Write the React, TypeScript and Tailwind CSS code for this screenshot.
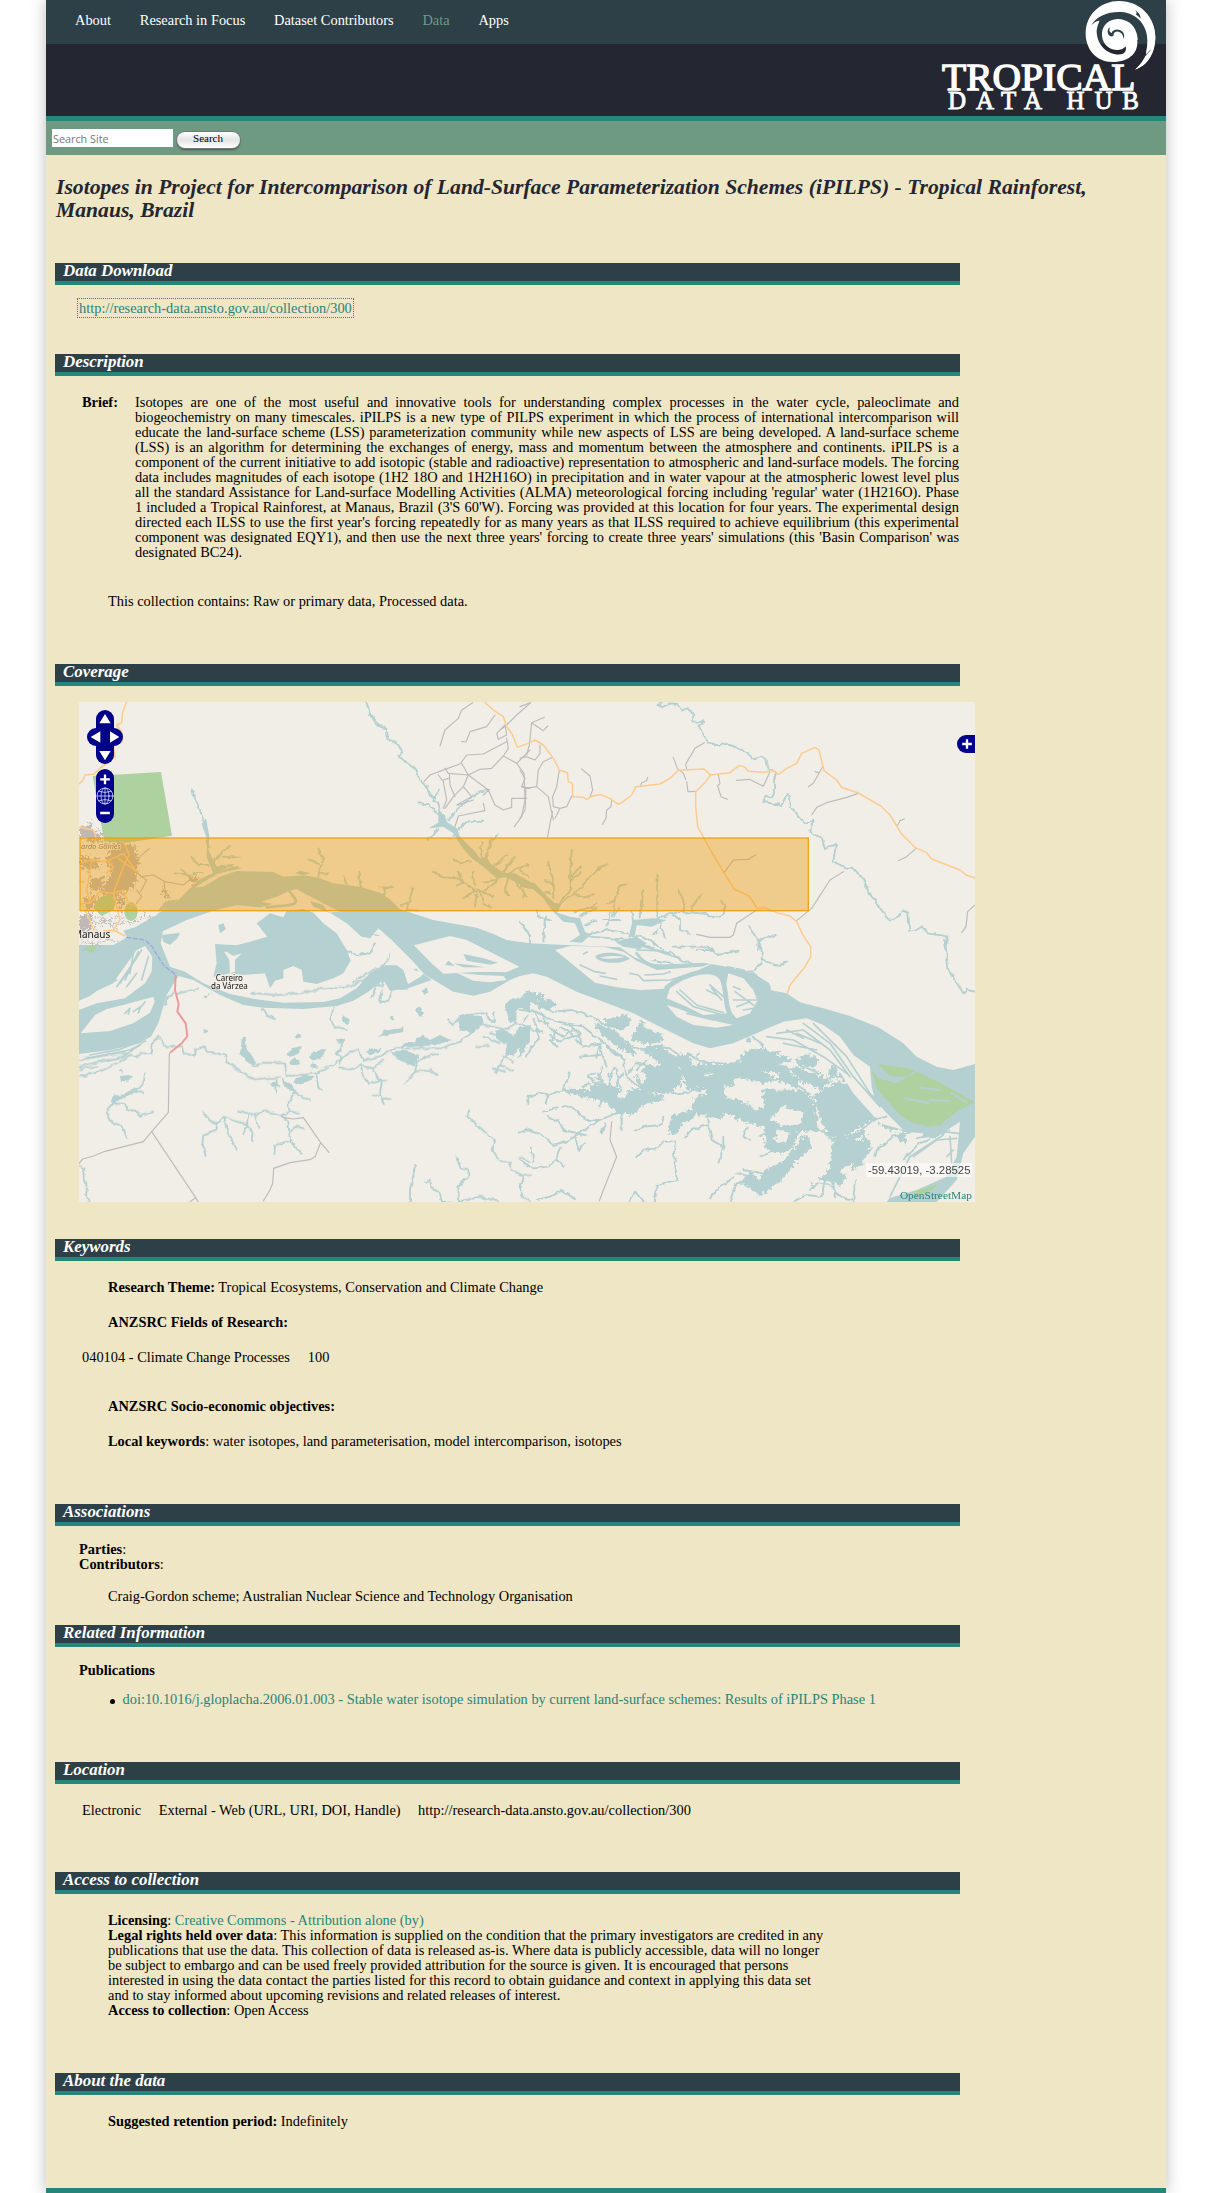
import React from "react";

const WATER = "#b5d0d0";
const LAND = "#f1eee8";
const ROAD = "#bcbcbc";
const ORANGE = "#fdcb8e";

/* The map is drawn on a 3x grid split into four quadrants: A (NW), B (NE), C (SW), D (SE). */

const riverMain =
  "M262 672L325 630L365 590L430 558L500 543L610 546L640 560L700 556L740 562L790 580L870 590L930 608L960 628L990 658L1090 690L1220 713L1270 732L1310 750L1380 760L1470 764L1650 772L1690 800L1750 826L1820 822L1900 818L1970 830L2050 850L2098 880L2100 900L2150 910L2190 937L2260 955L2340 978L2425 1012L2500 1060L2540 1100L2600 1130L2650 1140L2715 1122L2715 1340L2680 1390L2660 1470L2600 1536L2450 1536L2490 1480L2540 1400L2560 1330L2500 1325L2455 1300L2420 1250L2405 1190L2400 1130L2350 1095L2310 1040L2260 1005L2210 985L2140 995L2070 1025L1990 1060L1920 1075L1870 1060L1770 1010L1690 970L1600 935L1520 905L1430 860L1390 850L1350 858L1320 870L1260 905L1210 917L1150 905L1100 875L1065 855L1030 815L965 750L925 715L870 690L815 668L760 640L725 622L680 598L655 602L600 645L570 652L500 645L430 662L350 690L275 725L262 700Z";

const waterA = [
  "M27 770L60 775L125 768L172 742L160 722L195 712L265 672L330 655L360 680L280 715L272 760L300 830L345 845L400 880L480 912L560 928L640 938L760 936L810 925L860 895L900 850L945 826L980 826L1000 840L1014 882L1060 852L1085 870L1010 896L960 902L940 870L895 905L850 932L800 948L700 957L580 953L520 945L450 915L370 870L325 858L290 915L265 1000L243 1040L200 1062L120 1080L27 1092L27 960L80 940L165 925L225 880L245 845L247 800L225 768L200 780L150 850L60 918L27 932Z",
  "M27 765L185 765L190 785L130 880L60 912L27 890Z",
  "M650 662L700 657L730 668L760 700L800 730L830 780L842 812L820 850L790 865L740 882L700 875L695 840L670 828L640 840L640 865L615 872L600 895L585 850L520 855L480 850L430 860L440 820L435 762L500 766L540 755L592 740L560 700L600 670L640 682Z",
  "M730 650L720 632L760 645L775 668L800 665L850 668L890 685L925 715L900 745L875 740L830 700L780 668Z",
  "M445 705L460 700L468 718L450 730Z",
  "M275 735L330 728L322 745L300 765L280 755Z",
  "M360 598L385 570L430 548L500 528L515 535L440 552L400 575L375 598Z",
  "M262 665L285 635L325 627L300 650Z",
  "M675 550L690 542L722 550L700 556Z",
  "M395 402L408 385L418 440L415 480L440 530L480 530L430 552L410 500L412 450Z",
  "M1075 415L1105 398L1105 365L1125 375L1130 395L1160 415L1170 440L1215 485L1230 505L1250 500L1260 520L1300 548L1335 550L1380 575L1380 598L1350 585L1310 562L1280 565L1240 530L1205 505L1175 470L1150 430L1120 410Z",
];
const linesA = [
  "M888 36L902 75L925 100L950 118L955 150L980 160L1000 188L985 196L1005 215L1040 240L1048 270L1070 290L1080 318L1105 340L1115 380",
  "M900 75L915 100L935 115L950 118", "M1045 340L1075 342L1095 365L1110 375", "M1090 325L1110 300M1160 360L1200 325L1230 305L1258 298M1135 390L1165 355",
  "M1075 450L1105 415M1165 420L1190 395L1240 392M1150 435L1180 400",
  "M365 295L372 320L385 345L400 390L412 440L415 470",
  "M318 550L360 555L395 548M330 535L370 570M365 500L385 525L415 525M430 520L450 490L480 468M455 500L510 503M440 530L490 525",
  "M713 508L750 525L745 560M745 475L762 510L750 525M750 545L775 550M822 560L828 582M865 545L872 590",
  "M925 592L972 592M945 595L940 612M1030 592L1015 640L1008 662M995 645L1020 635M1010 660L1045 662",
  "M1085 545L1120 562L1165 565L1210 600L1240 605L1290 568M1165 545L1180 575L1160 590M1150 505L1170 520L1200 515M1210 605L1180 625M1220 610L1215 650M1230 605L1240 640L1265 655M1240 610L1270 618M1280 570L1240 575M1208 545L1215 590M1250 500L1260 460L1285 430M1235 500L1230 470L1240 455M1270 530L1310 495M1300 545L1335 500M1320 550L1340 535L1375 525M1315 560L1305 600L1315 615M1340 580L1370 620",
  "M730 735L760 770L800 775M750 735L790 760L860 795L900 790L915 760M735 755L765 770M900 730L925 735M1352 698L1380 735",
];
const waterB = [
  "M0 568L45 580L80 618L105 640L125 640L112 668L150 680L180 685L195 725L212 735L185 758L148 755L180 735L165 700L130 695L95 660L70 625L40 598L0 590Z",
  "M340 690L400 685L440 690L395 710L350 705L345 735L325 745L335 705Z",
  "M285 755L350 740L380 760L360 778L310 770Z",
];
const linesB = [
  "M83 515L98 560L100 625M75 570L95 580M90 610L75 605M155 480L150 560L155 595L120 635M155 560L180 530M150 575L182 545M260 520L225 545L175 600L120 640M165 615L190 622L222 615M230 640L200 655L160 665",
  "M0 540L25 560M10 595L10 625M280 680L282 630L300 590L322 580M265 640L285 630M370 600L362 680M412 555L412 680M478 600L492 640L492 665M545 612L518 650L518 668M602 630L612 645L612 670",
  "M50 660L60 685L90 690M75 680L70 755M0 695L30 740L30 775M180 680L230 655L200 650M195 705L230 690M270 670L262 710M250 690L300 690M280 680L300 655M335 665L340 700M420 700L435 745M400 690L455 670L480 690L480 720L510 732M455 672L490 665L560 672L580 685L612 672M415 720L400 735",
  "M425 38L412 45L425 52L450 40L472 42L485 62L502 55L520 72L518 98L535 98L550 88L548 102L535 108L550 135L575 165L600 165L605 160L640 168L680 188L702 208L725 200L740 210L745 235L768 248L762 270L762 310L750 325L735 320L730 336L785 345L800 315L810 320L812 350L855 400L878 392L870 425L905 445L915 478L948 462L940 515L975 532L1000 534L1038 575L1040 600L1070 640L1105 688L1125 688L1150 662L1165 668L1168 725L1185 722L1205 710L1225 730L1285 740L1275 775",
  "M688 708L715 755L715 780M715 750L770 735M540 770L580 775M460 770L540 770",
  "M200 735L265 720L320 730L380 745L430 780M210 740L330 750L400 775",
];
const waterC = [
  "M513 325L515 292L527 290L530 325L545 345L560 372L550 378L535 365L508 345Z",
  "M650 345L665 325L695 318L690 340L660 350ZM720 355L725 335L765 330L760 350L730 362ZM658 370L670 352L690 365L688 378ZM720 380L730 370L745 378L735 385ZM800 295L828 298L815 312ZM672 290L685 283L692 290L680 296Z",
  "M635 415L665 435L675 452L645 445ZM670 428L680 410L700 405L735 408L715 425L680 433ZM595 428L615 425L635 438L605 440Z",
  "M888 340L905 325L925 328L935 320L930 335L900 345ZM925 290L945 272L990 265L1000 258L1000 275L950 285ZM985 325L1010 308L1035 310L1040 290L1060 285L1080 300L1110 285L1130 295L1145 300L1100 315L1030 320Z",
  "M1165 270L1170 245L1160 238L1180 222L1235 225L1240 245L1205 278Z",
  "M1305 215L1310 190L1325 175L1380 178L1380 220L1350 200L1335 210L1340 240L1320 250Z",
  "M1275 275L1300 270L1330 285L1350 262L1380 258L1380 310L1350 320L1330 350L1310 340L1310 315L1285 300Z",
  "M965 335L1000 330L1045 345L1038 380L1010 370L980 355Z",
  "M1035 210L1050 202L1062 220L1050 232ZM1058 150L1070 145L1075 157L1062 165ZM960 235L968 225L975 237L965 243ZM1026 92L1038 84L1048 96L1038 105ZM815 240L825 228L840 240L830 260ZM400 268L412 270L416 280L402 280ZM400 168L422 160L408 173ZM150 408L185 404L175 425L152 422ZM145 395L155 388L160 398Z",
  "M125 478L130 463L150 472L180 455L195 440L195 455L150 480L130 490ZM1125 80L1135 62L1155 78ZM1180 42L1240 55L1285 68L1260 74L1190 60ZM1145 70L1200 75L1245 82L1180 82Z",
];
const linesC = [
  "M27 360L110 345L170 340M27 380L90 365L160 350L225 302M27 410L90 395L150 365L180 345L195 352L210 340L245 340L250 298L265 290L290 322L335 318L340 338L370 348L378 328L405 320L410 338L465 342L470 365L510 395L550 418L630 412M27 388L80 378",
  "M320 162L385 145M310 155L285 195M300 165L285 190",
  "M225 398L222 425L195 455L130 480M130 490L110 515L118 540L155 560L170 592M132 490L165 492L170 510L195 512L210 527L250 515M195 455L222 458",
  "M550 378L580 368L645 370L650 408L690 405L740 400L790 375L850 330L865 330L880 362L930 348L975 325L1110 325L1170 305L1235 252L1290 265L1310 270L1340 250L1330 195L1345 180",
  "M740 408L745 440L755 450M810 375L815 352L800 340L820 318L800 300M620 420L618 458M675 452L700 475L720 478M675 452L655 490L658 515L637 525M637 525L580 512L560 525L535 520L505 512M535 522L530 560L520 585M530 550L550 585L548 603M555 525L565 563M637 530L655 545L660 600M660 575L680 560L702 565M660 602L615 615L613 642M660 600L692 640M658 512L688 523M397 515L415 540L440 550L440 568L400 585L397 610L410 645M440 550L462 530L500 545L532 552M462 530L470 570L500 628",
  "M807 385L840 388L875 375L875 400L895 432M875 375L905 385L935 430L930 460L942 495M905 385L940 362M900 430L950 420M910 470L930 462M935 475L962 478M1040 375L1035 395L1005 430M1035 395L1080 390L1100 405M1040 370L1065 350L1105 340",
  "M792 200L782 230L790 258L830 268M578 205L590 225L612 237M905 170L920 135L935 140L940 120L955 125M935 150L930 185L955 185L968 150M960 128L985 120L990 145L1010 148",
  "M1130 240L1150 255L1170 228L1250 218L1258 240L1275 245L1272 220M540 158L620 165L690 160L760 145L840 138L900 112L945 75L962 38M850 125L940 75",
  "M1197 510L1192 530L1240 572L1272 600L1265 630L1290 663L1320 665L1325 690L1362 708L1380 705M1362 708L1350 745L1355 770L1380 782M1350 580L1380 568M1352 652L1380 665M1160 652L1172 685L1195 690L1195 710L1165 740L1167 785L1230 770L1285 785M1035 675L1030 710L1020 745L1020 785M1065 725L1080 722L1085 740L1110 762L1115 785L1150 785M27 680L40 685L42 720L52 745L48 765L57 785",
  "M1215 318L1260 318M1240 290L1290 310M1275 400L1290 370L1310 345M1290 375L1330 395M1300 350L1330 365M1260 280L1290 290M1270 385L1305 395",
];
const landG = [
  "M32 1030L75 975L110 957L160 945L250 920L254 935L240 968L190 1000L120 1023Z",
  "M1032 766L1140 738L1190 750L1348 830L1310 846L1220 846L1120 851L1080 815Z",
  "M1160 848L1230 855L1300 858L1310 870L1260 877L1210 872Z",
  "M1455 780L1500 768L1600 770L1660 785L1700 812L1760 840L1890 830L1930 820L1890 838L1800 895L1760 898L1710 900L1640 892L1575 878Z",
  "M1790 925L1800 895L1840 870L1890 850L1930 848L1955 870L1960 920L1972 970L1900 975L1850 950Z",
  "M1975 850L2020 865L2050 900L2062 932L2040 970L2000 985L1970 960L1965 900Z",
  "M1790 945L1830 958L1900 985L1990 1005L1940 1013L1870 1005L1820 980Z",
  "M575 635L620 620L665 600L678 630L665 642L620 645Z",
  "M2600 1340L2670 1295L2660 1400L2630 1460L2540 1500L2440 1530L2500 1400L2540 1345Z",
  "M2110 1015L2190 990L2260 1020L2330 1100L2380 1190L2450 1270L2500 1320L2430 1300L2350 1210L2300 1130L2240 1080L2150 1060Z",
  "M470 785L490 798L515 790L495 810L495 845L480 850L478 810L462 785Z",
  "M1010 835L1050 845L1055 858L1015 882Z",
  "M375 592L420 565L470 545L500 543L450 560L400 590Z",
];
const islandWater =
  "M1125 825L1135 812L1155 828ZM1180 792L1240 805L1285 818L1260 824L1190 812ZM1150 820L1200 825L1245 832L1180 832Z";
const riverStreaks = [
  "M1530 825L1575 845L1605 850M1540 792L1552 786M1590 858L1640 868M1680 850L1705 855L1720 872L1800 870L1900 840M1700 780L1760 782L1830 805M1725 855L1780 852L1800 845M1720 770L1800 790",
  "M1820 905L1870 950L1950 972M1830 900L1880 945L1960 968M1920 885L1960 920M1925 895L1955 930M1910 900L1940 915M1990 930L2060 930M1995 905L2050 945M1990 890L2010 898M2020 960L2085 950M2000 950L2040 935M1850 970L1930 990",
  "M2090 1040L2170 1050L2260 1100L2330 1150M2120 1030L2200 1020L2280 1080L2340 1160M2200 1000L2280 1060L2350 1160L2430 1250M2230 1000L2330 1100L2400 1210L2480 1290M2140 1060L2240 1080M2180 1030L2250 1060M2150 1020L2200 1045",
  "M2540 1345L2620 1325L2665 1330M2530 1400L2600 1350L2660 1345M2640 1340L2645 1420M2460 1520L2520 1400L2620 1335M2630 1400L2650 1380",
  "M60 1095L150 1078L215 1052M50 1105L180 1080L210 1065M165 970L180 955L175 972M190 965L212 950L205 968M215 948L225 935",
  "M165 870L205 785M150 880L215 780M140 890L175 840L200 800M215 870L235 800M170 890L200 850M190 790L180 850M60 905L140 870",
];
const marshD = [
  "M255 240L290 232L320 222L330 255L300 270L265 255ZM335 300L350 270L365 240L375 265L425 285L430 300L390 310L360 305ZM225 255L260 260L310 300L350 340L320 335L260 295Z",
  "M370 328L420 318L460 350L505 345L515 380L440 382L400 355Z",
  "M345 410L375 385L440 375L485 390L480 430L450 458L400 450L360 440Z",
  "M485 385L540 372L620 375L665 368L740 372L790 385L840 420L830 440L780 420L720 428L650 410L620 440L600 475L560 445L500 445Z",
  "M665 350L690 328L730 330L770 345L820 362L760 372L670 372ZM830 360L860 345L895 360L880 380L840 375ZM820 385L880 400L930 425L900 445L850 425ZM925 390L945 372L948 400L930 420ZM945 410L975 396L978 420Z",
  "M130 450L240 455L310 480L330 448L430 452L425 480L370 490L340 520L300 520L250 480L200 472Z",
  "M455 530L520 508L525 475L570 460L615 490L605 535L540 520L490 545L468 580L448 575Z",
  "M630 475L680 495L735 500L730 450L780 455L850 452L875 480L885 510L880 530L895 570L830 575L820 620L790 640L735 625L740 560L690 550L650 535Z",
  "M885 468L945 428L1000 435L1035 475L1070 500L1080 530L1020 560L960 592L925 587L905 550Z",
  "M940 600L1030 575L1053 620L1025 670L980 700L960 735L900 718L928 690L938 640Z",
  "M735 695L790 665L830 620L860 590L872 620L825 665L775 725L720 765L665 725L690 700L720 725Z",
  "M0 275L25 290L15 330L0 345ZM0 180L20 155L65 165L70 178L30 185ZM50 190L85 178L105 190L95 205L60 205ZM210 440L250 430L300 450L290 470L230 465Z",
  "M1070 540L1110 525L1155 562L1110 572ZM1130 585L1155 580L1160 610L1145 605Z",
  "M590 390L650 385L700 395L660 410L640 440L610 420ZM560 455L600 450L640 500L660 540L620 520L590 500Z",
];
const clearD = [
  "M690 440L728 445L732 505L695 510ZM770 570L812 578L795 612L765 600ZM640 415L695 420L690 440L645 450ZM750 535L790 498L855 520L840 552L790 560ZM350 400L366 392L380 408L365 428Z",
  "M610 440L650 438L660 465L632 475ZM730 392L785 402L770 418ZM1005 600L1020 590L1030 600ZM380 455L440 460L430 466Z",
  "M960 690L1000 670L985 715ZM550 395L585 400L555 406Z",
];
const linesD = [
  "M0 190L40 185L100 215L155 210L215 230L270 265L330 315L365 330L400 320L450 325L480 350",
  "M0 210L50 215L90 240L190 260L240 300L310 355L320 410L360 445L420 455L470 460L540 450L575 440L590 480L640 510",
  "M510 345L540 365L620 372L700 365L800 380M530 350L540 340M695 290L725 310L740 340L780 335M680 305L688 295L692 305Z",
  "M25 495L25 470L60 458L85 465L130 450L200 465M85 465L80 490M130 450L150 400M70 515L110 505M130 500L160 505L200 540L240 540L300 515M80 530L115 545L130 570L195 585M305 515L305 570M240 500L245 475M245 580L255 550M0 580L25 568L60 580L100 615L150 600L190 570L240 540M165 585L175 630L195 610M0 660L40 685L85 680L110 655L130 680M35 625L40 665M110 655L120 620M340 575L370 560L425 555L430 530M348 652L370 630L410 625L430 605L465 605L462 640L470 720L410 735L405 785",
  "M0 745L5 730M50 780L90 770L125 750L165 778M330 785L345 755L370 785M495 590L515 570L565 555L560 530M565 555L575 600L610 620L595 670M610 620L610 590M630 780L650 730L690 725L720 762M570 775L600 740L640 715",
  "M165 300L190 320L240 310L245 340L260 380M240 310L230 350M260 320L310 360M180 350L240 345M270 450L265 400M240 440L200 405L225 400M300 440L290 390M70 235L95 270L130 290L160 270M40 240L60 290L35 320L20 350M90 285L120 305L180 280M30 260L10 290M120 260L180 295M110 270L100 300",
  "M240 440L245 380M255 445L235 400M285 440L310 400M220 440L205 430L190 440M250 420L225 415M270 410L285 385M325 400L345 370L390 375M350 390L380 360M0 250L40 270L70 275M45 215L60 245L85 250M20 225L10 245M150 255L175 275L180 310M90 300L110 320",
  "M690 530L730 530L785 490L830 510L880 520L890 560L940 600L1000 590L1060 540L1100 530M835 640L845 590L865 595L855 635L835 640M880 470L890 540M905 480L925 560M680 560L670 590L690 600M720 590L750 570M720 650L770 630M670 690L730 700M650 700L700 710",
  "M820 385L920 460L945 455M840 375L900 400M790 410L870 460M650 360L750 345M550 400L640 398M560 430L640 420M760 370L860 410M700 375L830 390M800 425L830 445",
  "M1065 650L1070 630L1120 590L1200 570M1150 660L1200 610L1290 570M820 785L860 765L905 770L915 720M870 750L890 730L930 735L960 770L1000 780M940 730L945 775M1005 720L1000 785M880 745L875 725",
  "M620 80L690 95L740 130L750 150M530 30L580 30L595 45L655 32M710 0L725 30L725 65L700 95M725 60L780 78L800 62M1275 0L1285 90L1330 160L1340 150L1365 155M450 35L490 65L540 75M400 60L460 70",
];
const roadsA = [
  "M1110 168L1125 120L1165 85L1175 60L1208 38M1175 155L1188 156L1200 125L1250 110L1275 75M1290 120L1310 105L1340 75L1380 40M1305 105L1280 130L1285 148L1310 135L1305 105",
  "M1062 275L1080 255L1125 238L1170 222L1190 195L1240 192L1310 155M1125 235L1135 250L1195 255L1175 220M1195 255L1230 238L1265 235L1300 198L1315 175L1310 145M1300 198L1340 220L1380 180M1105 255L1120 275L1130 330L1120 355M1138 250L1140 285L1155 320M1120 270L1135 265M1195 255L1180 290L1150 320L1125 355M1180 290L1205 320L1160 345M1195 255L1255 300L1275 345L1300 360L1325 352L1325 325L1370 325M1165 345L1210 330M1155 410L1165 378L1245 362L1240 340M1340 220L1362 250L1365 330L1355 380L1333 410M1355 290L1380 295M1258 298L1240 315",
  "M210 500L238 475M212 560L250 555L285 575L340 585L370 560M212 605L230 570L215 560M282 575L285 600L300 625M200 640L215 620L200 600",
];
const roadsB = [
  "M20 195L28 165L35 98L73 82M35 98L70 122L83 108M0 50L32 38M0 205L18 200L45 210L60 190L60 165M0 240L15 265L5 290L18 295L15 360L0 385M15 295L50 290L85 320L100 390M50 290L55 240L70 215L95 203M118 240L110 290L98 320L100 350L120 355M105 385L120 355L140 350L155 318M98 365L90 400L83 440",
  "M185 237L210 258L218 300L210 320M275 330L273 350L260 360L258 385L248 403M362 288L365 278L380 272L383 262M460 203L472 235L490 250L497 268M500 237L497 222L525 175L553 158M500 275L504 305L528 304M595 255L600 280L593 288L603 320L622 328M650 271L688 268L730 289L750 245M908 230L880 280L865 290M885 245L895 248M1015 310L980 322L920 338L890 352L876 374M1153 387L1140 392L1132 408M1188 475L1160 500L1135 512",
  "M612 548L640 510L685 508L707 495M710 660L650 700L640 735L630 742L570 742L530 733M970 545L930 570L875 655L830 692M1365 645L1343 665L1338 710L1325 728",
];

const many = (list: string[]) => list.map((d, i) => <path key={i} d={d} />);

function CoverageMap() {
  return (
    <svg viewBox="27 36 2688 1500" className="block h-[500px] w-[896px]" strokeLinejoin="round" strokeLinecap="round">
      <defs>
        <filter id="ragged" x="-5%" y="-5%" width="110%" height="110%">
          <feTurbulence type="fractalNoise" baseFrequency="0.09" numOctaves="3" seed="4" />
          <feDisplacementMap in="SourceGraphic" scale="26" xChannelSelector="R" yChannelSelector="G" />
        </filter>
        <filter id="shredded" x="-15%" y="-15%" width="130%" height="130%">
          <feTurbulence type="fractalNoise" baseFrequency="0.12" numOctaves="3" seed="7" />
          <feDisplacementMap in="SourceGraphic" scale="42" xChannelSelector="R" yChannelSelector="G" />
        </filter>
        <filter id="wavy" x="-5%" y="-5%" width="110%" height="110%">
          <feTurbulence type="fractalNoise" baseFrequency="0.05" numOctaves="2" seed="9" />
          <feDisplacementMap in="SourceGraphic" scale="13" xChannelSelector="R" yChannelSelector="G" />
        </filter>
      </defs>
      <rect x="27" y="36" width="2688" height="1500" fill={LAND} />
      <path d="M68 258L273 246L306 437L170 458L103 455Z" fill="#aed1a0" />
      <g fill={WATER}>
        {many(waterA)}
        <path d={riverMain} />
        <g transform="translate(1350 0)">{many(waterB)}</g>
      </g>
      <g fill={WATER} transform="translate(0 750)" filter="url(#wavy)">{many(waterC)}</g>
      <g transform="translate(1350 750)" filter="url(#ragged)">
        <g fill={WATER} stroke={WATER} strokeWidth="5">{many(marshD)}</g>
        <g fill={LAND}>{many(clearD)}</g>
      </g>
      <g fill={LAND}>{many(landG)}</g>
      <path d={islandWater} fill={WATER} />
      <g fill="none" stroke={WATER} strokeWidth="5">
        {many(riverStreaks)}
        <g strokeWidth="5.5" filter="url(#wavy)">
          {many(linesA)}
          <g transform="translate(1350 0)">{many(linesB)}</g>
          <g transform="translate(0 750)">{many(linesC)}</g>
          <g transform="translate(1350 750)">{many(linesD)}</g>
        </g>
      </g>
      <path d="M1575 800C1590 785 1650 782 1680 806C1650 825 1590 822 1575 800Z" fill={WATER} />
      <path d="M1590 803C1610 797 1640 796 1665 801C1640 807 1610 808 1590 803Z" fill={LAND} />
      <path d="M1790 893C1850 845 1930 830 1955 865C1975 900 1960 960 1990 985" fill="none" stroke={WATER} strokeWidth="14" />
      <path d="M1700 790C1740 850 1800 820 1900 825" fill="none" stroke={WATER} strokeWidth="8" />
      <path d="M590 652C640 645 690 650 675 625L655 600" fill="none" stroke={WATER} strokeWidth="8" />
      <path d="M2405 1142L2425 1165L2480 1180L2540 1145L2600 1172L2713 1236L2660 1265L2610 1305L2580 1310L2530 1300L2490 1275L2420 1195Z" fill="#aed1a0" />
      <path d="M2423 1122L2510 1134L2535 1142L2510 1160L2460 1158Z" fill="#aed1a0" />
      <path d="M2505 1225L2575 1238M2550 1193L2610 1200M2580 1230L2640 1233M2645 1210L2690 1238" stroke={WATER} strokeWidth="6" />
      <path d="M2530 1505L2605 1482L2585 1500L2540 1520Z" fill="#aed1a0" />

      <g fill="none" stroke={ROAD} strokeWidth="3.5">
        {many(roadsA)}
        <g transform="translate(1350 0)">{many(roadsB)}</g>
        <path d="M298 1090L295 1267L245 1325L220 1355L105 1384L70 1398L38 1407L27 1420M245 1325L377 1523L385 1536M377 1523L360 1535M638 1282L670 1287L700 1283L752 1358L777 1387M752 1358L735 1400L720 1409L660 1418L611 1435L608 1480L600 1500L580 1533M1625 1295L1620 1350L1640 1400L1600 1500L1588 1533" />
      </g>
      <g fill="#bfb8b5" filter="url(#shredded)">
        <path d="M27 405L50 410L62 392L68 420L95 430L98 452L75 460L27 440Z" />
        <path d="M100 462L150 458L195 468L205 500L205 550L190 595L155 605L130 625L90 608L110 580L125 540L105 510L120 490Z" />
        <path d="M30 500L80 505L90 530L60 540L30 530ZM60 565L100 560L95 600L60 605ZM40 625L80 620L75 655L45 660ZM140 620L160 615L165 640L150 655Z" />
        <path d="M27 680L60 668L66 700L60 722L27 725Z" />
        <path d="M272 605L290 600L297 625L285 620ZM355 565L385 560L375 585Z" />
      </g>
      <g fill="none" stroke="#c0bab8" strokeWidth="3" filter="url(#ragged)">
        <path d="M75 700L150 680M80 680L140 720M100 690L90 720M120 680L130 710M150 650L160 690L190 700L215 680L245 685M195 680L210 700M220 660L230 690M30 760L60 755L90 770M40 780L110 750L140 755M70 670L75 720M85 665L110 700L160 700" />
      </g>
      <g fill="#aed1a0">
        <path d="M85 625L120 610L138 635L130 660L95 678L70 655Z" />
        <ellipse cx="183" cy="665" rx="20" ry="28" />
        <path d="M45 770L75 765L80 780L60 790Z" />
      </g>
      <g fill="none" stroke={ORANGE} strokeWidth="4.5">
        <path d="M170 36L158 65L155 98L140 105L155 125L157 155L130 170L135 200L90 235L70 253L45 255L38 272L27 282" />
        <path d="M27 412L70 420L78 440L75 455M27 522L60 510L110 515L160 490L195 540M145 505L200 545M160 455L178 495L160 530L130 610L90 605L60 640L35 640L60 690L72 722M65 515L50 600L60 640M130 610L160 600L175 640L200 650M130 610L150 690L130 720L165 738M100 722L140 722M110 550L130 530L110 510M27 575L45 575" />
        <path d="M1245 38L1270 60L1300 80L1310 110L1328 135L1342 172L1380 158L1395 150L1420 165L1450 205L1468 240L1492 248L1495 275L1507 280L1508 320L1540 322L1550 328L1570 317L1592 314L1620 325L1645 343L1655 338L1685 315L1698 290L1770 282L1800 265L1825 241L1902 237L1922 255L1980 248L2008 226L2025 232L2035 244L2085 247L2105 240L2125 253L2150 235L2180 220L2195 190L2235 172L2247 180L2262 242L2300 270L2315 292L2365 309L2435 350L2460 375L2495 432L2535 472L2570 488L2585 507L2670 540L2690 556L2715 564" />
        <path d="M1922 255L1905 278L1877 305L1877 350L1883 410L1930 495L1962 548L1992 597L2037 618L2062 655L2085 653L2120 668L2160 678L2180 695L2200 737L2222 770L2222 800L2205 830L2160 885L2153 908" />
      </g>
      <path d="M317 857L315 900L326 942L322 965L347 1000L352 1038L335 1060L302 1087" fill="none" stroke="#ee9a9c" strokeWidth="6" />
      <path d="M170 742L225 750L245 768L280 825L318 855" fill="none" stroke="#9aa8e0" strokeWidth="4" strokeDasharray="12 8" />

      <g fontFamily="'Noto Sans', 'Open Sans', sans-serif" stroke={LAND} strokeWidth="5" paintOrder="stroke">
        <text x="152" y="477" textAnchor="end" fontSize="22" fontStyle="italic" fill="#777">ardo Gomes</text>
        <text x="121" y="744" textAnchor="end" fontSize="30" fill="#111">Manaus</text>
        <text x="478" y="873" textAnchor="middle" fontSize="24" fill="#111">Careiro</text>
        <text x="478" y="898" textAnchor="middle" fontSize="24" fill="#111">da Várzea</text>
      </g>

      <rect x="30" y="444" width="2185" height="218" fill="#ee9900" fillOpacity="0.4" stroke="#ee9900" strokeOpacity="0.85" strokeWidth="4" strokeLinejoin="miter" />

      <g fill="#00008b">
        <rect x="78" y="60" width="54" height="162" rx="27" />
        <rect x="51" y="114" width="108" height="54" rx="27" />
        <rect x="78" y="237" width="54" height="162" rx="27" />
        <path d="M2715 135H2688A27 27 0 0 0 2688 189H2715Z" />
      </g>
      <path d="M105 72L122 100H88ZM105 211L122 183H88ZM62 141L91 124V158ZM148 141L120 124V158Z" fill="#fff" />
      <path d="M94 268H116M105 257V279M94 369H116M2680 162H2702M2691 151V173" stroke="#fff" strokeWidth="7" strokeLinecap="square" />
      <g fill="none" stroke="#ccd2f5" strokeWidth="2.5">
        <circle cx="105" cy="318" r="24" />
        <ellipse cx="105" cy="318" rx="12" ry="24" />
        <path d="M105 294V342M81 318H129M86 304Q105 311 124 304M86 332Q105 325 124 332" />
      </g>
    </svg>
  );
}

function Logo() {
  return (
    <svg viewBox="120 0 660 340" className="absolute top-0 right-[6px] h-[113.3px] w-[220px]">
      <mask id="swirl" maskUnits="userSpaceOnUse" x="540" y="0" width="240" height="220">
        <path d="M557 102C556 44 602 3 657 3C722 3 766 52 766 112C766 160 742 198 705 209C722 194 732 178 738 163L742 120L712 120C716 165 680 186 637 186C590 186 558 150 557 102Z" fill="#fff" />
        <path d="M574 76C590 48 624 34 664 36C712 40 744 76 743 128L738 166C734 172 726 182 705 209C696 202 700 190 704 178C716 152 716 120 710 100C702 70 676 56 652 57C626 58 608 76 606 98C604 126 622 148 650 150C664 150 672 146 677 139C680 150 676 158 668 162C630 170 590 140 590 92C591 82 594 72 599 62C590 62 582 68 574 76Z" fill="#000" />
        <path d="M704 28C722 50 742 78 743 120C742 140 738 156 738 166C736 180 722 196 705 209C742 196 766 160 766 112C766 70 742 36 704 28Z" fill="#fff" />
        <path d="M705 30C714 36 722 44 722 56C717 50 711 46 706 43C712 42 711 36 705 30Z" fill="#000" />
        <path d="M738 166C742 160 746 154 752 150" stroke="#000" strokeWidth="2" fill="none" />
        <path d="M640 108C632 112 624 106 623 96C623 88 626 84 630 82C626 92 630 98 635 99C636 90 650 86 660 90C672 95 676 108 670 118C672 102 656 88 643 98C640 101 641 105 640 108Z" fill="#000" />
      </mask>
      <rect x="540" y="0" width="240" height="220" fill="#fff" mask="url(#swirl)" />
      <g fill="#fff" fontFamily="'Liberation Serif', serif">
        <text x="126" y="269" fontSize="113" textLength="580" lengthAdjust="spacingAndGlyphs" stroke="#fff" strokeWidth="4">TROPICAL</text>
        <text x="144" y="326" fontSize="75" textLength="573" stroke="#fff" strokeWidth="2.5">DATA HUB</text>
      </g>
    </svg>
  );
}

function Heading({ children }: { children: React.ReactNode }) {
  return (
    <h2 className="h-[22px] w-[905px] border-b-4 border-[#28857b] bg-[#2d3f47] pl-2 text-[16.9px] leading-[15px] font-bold text-white italic">
      {children}
    </h2>
  );
}

const briefLines = [
  "Isotopes are one of the most useful and innovative tools for understanding complex processes in the water cycle, paleoclimate and",
  "biogeochemistry on many timescales. iPILPS is a new type of PILPS experiment in which the process of international intercomparison will",
  "educate the land-surface scheme (LSS) parameterization community while new aspects of LSS are being developed. A land-surface scheme",
  "(LSS) is an algorithm for determining the exchanges of energy, mass and momentum between the atmosphere and continents. iPILPS is a",
  "component of the current initiative to add isotopic (stable and radioactive) representation to atmospheric and land-surface models. The forcing",
  "data includes magnitudes of each isotope (1H2 18O and 1H2H16O) in precipitation and in water vapour at the atmospheric lowest level plus",
  "all the standard Assistance for Land-surface Modelling Activities (ALMA) meteorological forcing including 'regular' water (1H216O). Phase",
  "1 included a Tropical Rainforest, at Manaus, Brazil (3'S 60'W). Forcing was provided at this location for four years. The experimental design",
  "directed each ILSS to use the first year's forcing repeatedly for as many years as that ILSS required to achieve equilibrium (this experimental",
  "component was designated EQY1), and then use the next three years' forcing to create three years' simulations (this 'Basin Comparison' was",
];

export default function App() {
  return (
    <div className="flex min-h-[2193px] justify-center overflow-hidden bg-white font-['Liberation_Serif','Times_New_Roman',serif] text-[14.4px] leading-[15px] text-black">
      <div className="flex w-[1120px] flex-col bg-[#eee6c5] shadow-[0_0_15px_#bbb]">
        <header className="relative">
          <nav className="flex h-[44px] gap-[28.8px] bg-[#2d3f47] pt-[13px] pl-[29px] text-white">
            <a>About</a>
            <a>Research in Focus</a>
            <a>Dataset Contributors</a>
            <a className="text-[#6f9a82]">Data</a>
            <a>Apps</a>
          </nav>
          <div className="h-[77px] border-b-5 border-[#28857b] bg-[#242631]" />
          <Logo />
        </header>
        <form className="flex h-[34px] items-start bg-[#6f9a82] pt-2 pl-1.5">
          <input
            placeholder="Search Site"
            className="h-[18px] w-[121px] bg-white pl-px font-['Open_Sans',sans-serif] text-[10.8px] text-black placeholder:text-[#777]"
          />
          <button
            type="button"
            className="mt-[3px] ml-[3.5px] h-[16px] w-[63px] rounded-full bg-linear-to-b from-white via-[#e4e4e4] to-white pb-[3px] text-[11px] leading-[13px] shadow-[0_0_0_1px_#777,0_2px_2px_#3f5a4b]"
          >
            Search
          </button>
        </form>

        <main className="pl-[9px]">
          <h1 className="mt-[21px] ml-px text-[21.64px] leading-[23px] font-bold whitespace-nowrap text-[#242631] italic">
            Isotopes in Project for Intercomparison of Land-Surface Parameterization Schemes (iPILPS) - Tropical Rainforest,
            <br />
            Manaus, Brazil
          </h1>

          <section className="mt-[41px]">
            <Heading>Data Download</Heading>
            <p className="mt-4 pl-6 text-[#28857b]">
              <a className="outline-1 outline-offset-1 outline-[#28857b] outline-dotted">http://research-data.ansto.gov.au/collection/300</a>
            </p>
          </section>

          <section className="mt-[38px]">
            <Heading>Description</Heading>
            <div className="mt-[19px] flex pl-[27px]">
              <b className="w-[53px]">Brief:</b>
              <div className="w-[824px]">
                {briefLines.map((line) => (
                  <p key={line} className="text-justify [text-align-last:justify]">
                    {line}
                  </p>
                ))}
                <p>designated BC24).</p>
              </div>
            </div>
            <p className="mt-[34px] pl-[53px]">This collection contains: Raw or primary data, Processed data.</p>
          </section>

          <section className="mt-[55px]">
            <Heading>Coverage</Heading>
            <div className="relative mt-4 ml-6 w-[896px]">
              <CoverageMap />
              <span className="absolute right-[3px] bottom-[25px] h-[14px] bg-white/60 px-[1.5px] font-['Liberation_Sans',Arial,sans-serif] text-[11.4px] leading-[14px] text-[#444]">
                -59.43019, -3.28525
              </span>
              <a className="absolute right-[3px] bottom-0 text-[11.4px] leading-[13px] text-[#28857b]">OpenStreetMap</a>
            </div>
          </section>

          <section className="mt-[37px]">
            <Heading>Keywords</Heading>
            <p className="mt-[19px] pl-[53px]">
              <b>Research Theme:</b> Tropical Ecosystems, Conservation and Climate Change
            </p>
            <p className="mt-5 pl-[53px] font-bold">ANZSRC Fields of Research:</p>
            <div className="mt-5 flex gap-[18px] pl-[27px]">
              <span>040104 - Climate Change Processes</span>
              <span>100</span>
            </div>
            <p className="mt-[34px] pl-[53px] font-bold">ANZSRC Socio-economic objectives:</p>
            <p className="mt-5 pl-[53px]">
              <b>Local keywords</b>: water isotopes, land parameterisation, model intercomparison, isotopes
            </p>
          </section>

          <section className="mt-[55px]">
            <Heading>Associations</Heading>
            <p className="mt-4 pl-6"><b>Parties</b>:</p>
            <p className="pl-6"><b>Contributors</b>:</p>
            <p className="mt-[17px] pl-[53px]">Craig-Gordon scheme; Australian Nuclear Science and Technology Organisation</p>
          </section>

          <section className="mt-[21px]">
            <Heading>Related Information</Heading>
            <p className="mt-4 pl-6 font-bold">Publications</p>
            <ul className="mt-[14px] pl-[55px]">
              <li className="flex items-center gap-[7.5px]">
                <span className="mt-[3px] size-[5px] rounded-full bg-black" />
                <a className="text-[#28857b]">
                  doi:10.1016/j.gloplacha.2006.01.003 - Stable water isotope simulation by current land-surface schemes: Results of iPILPS Phase 1
                </a>
              </li>
            </ul>
          </section>

          <section className="mt-[55px]">
            <Heading>Location</Heading>
            <div className="mt-[19px] flex gap-[17.5px] pl-[27px]">
              <span>Electronic</span>
              <span>External - Web (URL, URI, DOI, Handle)</span>
              <span>http://research-data.ansto.gov.au/collection/300</span>
            </div>
          </section>

          <section className="mt-[54px]">
            <Heading>Access to collection</Heading>
            <div className="mt-[19px] pl-[53px] whitespace-nowrap">
              <p><b>Licensing</b>: <a className="text-[#28857b]">Creative Commons - Attribution alone (by)</a></p>
              <p>
                <b>Legal rights held over data</b>: This information is supplied on the condition that the primary investigators are credited in any
                <br />
                publications that use the data. This collection of data is released as-is. Where data is publicly accessible, data will no longer
                <br />
                be subject to embargo and can be used freely provided attribution for the source is given. It is encouraged that persons
                <br />
                interested in using the data contact the parties listed for this record to obtain guidance and context in applying this data set
                <br />
                and to stay informed about upcoming revisions and related releases of interest.
              </p>
              <p><b>Access to collection</b>: Open Access</p>
            </div>
          </section>

          <section className="mt-[55px]">
            <Heading>About the data</Heading>
            <p className="mt-[19px] pl-[53px]"><b>Suggested retention period:</b> Indefinitely</p>
          </section>
        </main>
        <footer className="mt-[59px] h-[5px] bg-[#28857b]" />
      </div>
    </div>
  );
}
